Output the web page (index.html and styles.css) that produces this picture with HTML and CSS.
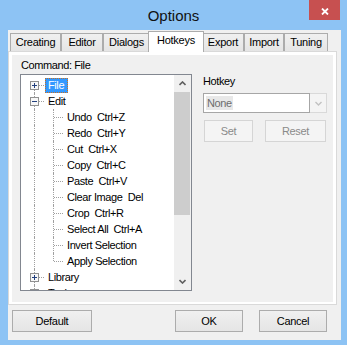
FILE: index.html
```html
<!DOCTYPE html>
<html>
<head>
  <title>Options</title>
  <link rel="stylesheet" href="styles.css">
</head>
<body>
  <div class="window">
    <div class="titlebar">
      <span class="title">Options</span>
      <div class="close">
        <svg width="8" height="7" viewBox="0 0 8 7"><path d="M1 0.5L7 6.5M7 0.5L1 6.5" stroke="#fff" stroke-width="1.8"/></svg>
      </div>
    </div>
    <div class="client">
      <div class="tabs">
        <div class="tab t-creating">Creating</div>
        <div class="tab t-editor">Editor</div>
        <div class="tab t-dialogs">Dialogs</div>
        <div class="tab t-hotkeys active">Hotkeys</div>
        <div class="tab t-export">Export</div>
        <div class="tab t-import">Import</div>
        <div class="tab t-tuning">Tuning</div>
      </div>
      <div class="panel">
        <div class="sheet">
          <div class="left">
            <div class="cmd">Command: File</div>
            <div class="treebox">
              <div class="items">
                <div class="row">
                  <span class="cell first"><svg class="exp" width="9" height="9" viewBox="0 0 9 9"><rect x="0.5" y="0.5" width="8" height="8" fill="#f7f7f7" stroke="#919191"/><path d="M2 4.5H7M4.5 2V7" stroke="#23407e"/></svg></span>
                  <span class="label selected">File</span>
                </div>
                <div class="row">
                  <span class="cell tee"><svg class="exp" width="9" height="9" viewBox="0 0 9 9"><rect x="0.5" y="0.5" width="8" height="8" fill="#f7f7f7" stroke="#919191"/><path d="M2 4.5H7" stroke="#23407e"/></svg></span>
                  <span class="label">Edit</span>
                </div>
                <div class="row"><span class="cell pipe"></span><span class="cell tee"></span><span class="label">Undo  Ctrl+Z</span></div>
                <div class="row"><span class="cell pipe"></span><span class="cell tee"></span><span class="label">Redo  Ctrl+Y</span></div>
                <div class="row"><span class="cell pipe"></span><span class="cell tee"></span><span class="label">Cut  Ctrl+X</span></div>
                <div class="row"><span class="cell pipe"></span><span class="cell tee"></span><span class="label">Copy  Ctrl+C</span></div>
                <div class="row"><span class="cell pipe"></span><span class="cell tee"></span><span class="label">Paste  Ctrl+V</span></div>
                <div class="row"><span class="cell pipe"></span><span class="cell tee"></span><span class="label">Clear Image  Del</span></div>
                <div class="row"><span class="cell pipe"></span><span class="cell tee"></span><span class="label">Crop  Ctrl+R</span></div>
                <div class="row"><span class="cell pipe"></span><span class="cell tee"></span><span class="label">Select All  Ctrl+A</span></div>
                <div class="row"><span class="cell pipe"></span><span class="cell tee"></span><span class="label">Invert Selection</span></div>
                <div class="row"><span class="cell pipe"></span><span class="cell ell"></span><span class="label">Apply Selection</span></div>
                <div class="row">
                  <span class="cell tee"><svg class="exp" width="9" height="9" viewBox="0 0 9 9"><rect x="0.5" y="0.5" width="8" height="8" fill="#f7f7f7" stroke="#919191"/><path d="M2 4.5H7M4.5 2V7" stroke="#23407e"/></svg></span>
                  <span class="label">Library</span>
                </div>
                <div class="row">
                  <span class="cell tee"><svg class="exp" width="9" height="9" viewBox="0 0 9 9"><rect x="0.5" y="0.5" width="8" height="8" fill="#f7f7f7" stroke="#919191"/><path d="M2 4.5H7M4.5 2V7" stroke="#23407e"/></svg></span>
                  <span class="label">Tools</span>
                </div>
              </div>
              <div class="vscroll">
                <div class="arrow">
                  <svg width="7" height="5" viewBox="0 0 7 5"><path d="M0.5 4L3.5 1L6.5 4" fill="none" stroke="#606060" stroke-width="1.6"/></svg>
                </div>
                <div class="thumb"></div>
                <div class="track"></div>
                <div class="arrow">
                  <svg width="7" height="5" viewBox="0 0 7 5"><path d="M0.5 1L3.5 4L6.5 1" fill="none" stroke="#606060" stroke-width="1.6"/></svg>
                </div>
              </div>
            </div>
          </div>
          <div class="right">
            <div class="hk-label">Hotkey</div>
            <div class="combo">
              <div class="combo-edit"><span class="combo-value">None</span></div>
              <div class="combo-btn">
                <svg width="7" height="5" viewBox="0 0 7 5"><path d="M0.5 1L3.5 4L6.5 1" fill="none" stroke="#c2c2c2" stroke-width="1.4"/></svg>
              </div>
            </div>
            <div class="hk-buttons">
              <div class="btn disabled b-set">Set</div>
              <div class="btn disabled b-reset">Reset</div>
            </div>
          </div>
        </div>
      </div>
      <div class="footer">
        <div class="btn b-default">Default</div>
        <div class="btn b-ok">OK</div>
        <div class="btn b-cancel">Cancel</div>
      </div>
    </div>
  </div>
</body>
</html>
```

FILE: styles.css
```css
body {
  margin: 0;
  background: #8dc3f4;
  font-family: "Liberation Sans", Arial, sans-serif;
  font-size: 11px;
  color: #000;
}
.window {
  width: 347px;
  height: 345px;
  display: flex;
  flex-direction: column;
}
.titlebar {
  height: 30px;
  display: grid;
  grid-template-columns: 1fr auto 1fr;
}
.title {
  grid-column: 2;
  font-size: 15px;
  line-height: 30px;
  padding-top: 1px;
  color: #111;
}
.close {
  grid-column: 3;
  justify-self: end;
  margin-right: 7px;
  width: 31px;
  height: 20px;
  background: #c75050;
  display: flex;
  align-items: center;
  justify-content: center;
  padding-top: 2px;
  box-sizing: border-box;
}
.client {
  margin-left: 8px;
  width: 333px;
  height: 310px;
  background: #f0f0f0;
}
.tabs {
  display: flex;
  height: 21px;
  padding: 3px 0 0 2px;
  box-sizing: border-box;
}
.tab {
  height: 18px;
  box-sizing: border-box;
  border: 1px solid #acacac;
  border-bottom: none;
  background: linear-gradient(#f0f0f0, #e5e5e5);
  text-align: center;
  line-height: 16px;
  letter-spacing: -0.25px;
  flex: none;
}
.t-creating { width: 51px; }
.t-editor { width: 42px; }
.t-dialogs { width: 47px; }
.t-hotkeys { width: 52px; }
.t-export { width: 42px; }
.t-import { width: 40px; }
.t-tuning { width: 44px; }
.tab.active {
  margin: -2px -2px 0;
  height: 21px;
  width: 56px;
  background: #fff;
  position: relative;
  z-index: 1;
}
.panel {
  width: 329px;
  height: 254px;
  box-sizing: border-box;
  border: 1px solid #d9d9d9;
  background: #fff;
  padding: 3px 3px 2px 3px;
}
.sheet {
  height: 100%;
  background: #f0f0f0;
  display: flex;
  padding: 4px 0 0 8px;
  box-sizing: border-box;
  letter-spacing: -0.4px;
}
.left {
  width: 172px;
}
.cmd {
  margin-left: 1px;
  line-height: 13px;
  height: 13px;
}
.treebox {
  margin-top: 2px;
  height: 217px;
  box-sizing: border-box;
  border: 1px solid #828790;
  background: #fff;
  display: flex;
}
.items {
  flex: 1;
  overflow: hidden;
  padding: 2px 0 0 4px;
}
.row {
  display: flex;
  height: 16px;
}
.cell {
  width: 19px;
  height: 16px;
  position: relative;
  flex: none;
}
.cell::before, .cell::after {
  content: "";
  position: absolute;
}
.pipe::before, .tee::before {
  left: 9px;
  top: 0;
  bottom: 0;
  border-left: 1px dotted #a0a0a0;
}
.first::before {
  left: 9px;
  top: 8px;
  bottom: 0;
  border-left: 1px dotted #a0a0a0;
}
.ell::before {
  left: 9px;
  top: 0;
  height: 8px;
  border-left: 1px dotted #a0a0a0;
}
.tee::after, .ell::after, .first::after {
  left: 10px;
  top: 8px;
  width: 9px;
  border-top: 1px dotted #a0a0a0;
}
.exp {
  position: absolute;
  left: 5px;
  top: 4px;
  z-index: 1;
}
.label {
  margin: 1px 0 0 1px;
  height: 15px;
  box-sizing: border-box;
  border: 1px solid transparent;
  padding: 0 3px 0 2px;
  line-height: 13px;
  white-space: pre;
}
.label.selected {
  background: #3399ff;
  color: #fff;
  border: 1px dotted #c87020;
}
.vscroll {
  width: 17px;
  display: flex;
  flex-direction: column;
  background: #f0f0f0;
}
.arrow {
  height: 17px;
  display: flex;
  align-items: center;
  justify-content: center;
}
.thumb {
  height: 123px;
  margin-right: 1px;
  background: #cdcdcd;
}
.track {
  flex: 1;
}
.right {
  margin: 16px 0 0 11px;
}
.hk-label {
  line-height: 13px;
  height: 13px;
}
.combo {
  margin-top: 5px;
  width: 124px;
  height: 20px;
  display: flex;
}
.combo-edit {
  flex: 1;
  border: 1px solid #a6a6a6;
  background: #fff;
  padding: 2px;
  box-sizing: border-box;
}
.combo-value {
  display: inline-block;
  height: 14px;
  line-height: 14px;
  padding: 0 1px;
  background: #e8e8e8;
  color: #6d6d6d;
}
.combo-btn {
  width: 17px;
  box-sizing: border-box;
  border: 1px solid #d9d9d9;
  border-left: none;
  background: #f4f4f4;
  display: flex;
  align-items: center;
  justify-content: center;
}
.hk-buttons {
  margin-top: 7px;
  display: flex;
}
.btn {
  height: 22px;
  box-sizing: border-box;
  border: 1px solid #acacac;
  background: linear-gradient(#f0f0f0, #e5e5e5);
  text-align: center;
  line-height: 20px;
  letter-spacing: -0.3px;
}
.btn.disabled {
  border-color: #d5d5d5;
  background: #f4f4f4;
  color: #8a8a8a;
}
.b-set { width: 49px; margin-left: 1px; }
.b-reset { width: 61px; margin-left: 12px; }
.footer {
  display: flex;
  margin-top: 5px;
  padding-left: 4px;
}
.b-default { width: 80px; }
.b-ok { width: 68px; margin-left: 83px; }
.b-cancel { width: 68px; margin-left: 16px; }
```
